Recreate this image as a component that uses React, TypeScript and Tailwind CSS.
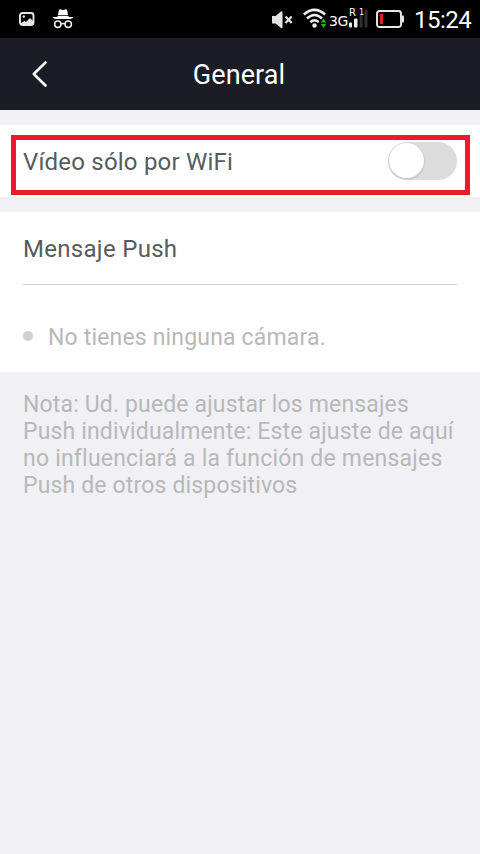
import React from "react";

const NOTE_LINES = [
  { text: "Nota: Ud. puede ajustar los mensajes", tracking: "tracking-[0.15px]" },
  { text: "Push individualmente: Este ajuste de aquí", tracking: "tracking-[0.16px]" },
  { text: "no influenciará a la función de mensajes", tracking: "tracking-[0.21px]" },
  { text: "Push de otros dispositivos", tracking: "tracking-[0.16px]" },
];

function PictureIcon() {
  return (
    <svg width="16" height="14" viewBox="0 0 16 14" className="ml-[19px]">
      <rect x="1" y="1" width="13.5" height="12" rx="2.5" fill="none" stroke="#e6e6e6" strokeWidth="1.900" />
      <circle cx="4.800" cy="4.500" r="1.200" fill="#e6e6e6" />
      <path d="M2 12.500V11l3.500-2 1.500 1L11 6l3 3v4z" fill="#e6e6e6" />
    </svg>
  );
}

function IncognitoIcon() {
  return (
    <svg width="22" height="20" viewBox="0 0 22 20" className="ml-[17px]">
      <path d="M7 1q.5-1 1.700-.6L11 1l2.300-.6Q14.500 0 15 1l1.200 5.200H5.800z" fill="#fff" />
      <path d="M5.600 7h10.800l.4 1H21.500q-1 2-3.500 2H4Q1.500 10 .5 8h4.700z" fill="#fff" />
      <g fill="none" stroke="#f2f2f2" strokeWidth="1.500">
        <circle cx="5.800" cy="15.300" r="3.200" />
        <circle cx="16.200" cy="15.300" r="3.200" />
        <path d="M9 15q2-1 4 0" />
      </g>
    </svg>
  );
}

function MutedIcon() {
  return (
    <svg width="22" height="20" viewBox="0 0 22 20" className="relative top-px ml-auto">
      <path d="M0 6h3.500L9 1.500Q10.500 .5 10.500 2.500v14.500Q10.500 19 9 18L3.500 13.500H0z" fill="#e4e4e4" />
      <path d="m13.500 6.500 6.200 6.400m0-6.400-6.200 6.400" stroke="#e4e4e4" strokeWidth="2.200" />
    </svg>
  );
}

function WifiIcon() {
  return (
    <svg width="26" height="20" viewBox="0 0 26 20" className="relative -top-px ml-[9px]">
      <g fill="none" stroke="#eee" strokeWidth="2.500">
        <path d="M.8 6.500Q11.500-2.800 22.200 6.500" />
        <path d="M4 10.500Q11.500 3.500 19 10.500" />
        <path d="M7.300 14.200Q11.500 10.200 15.700 14.200" />
      </g>
      <circle cx="11.500" cy="17.500" r="2.200" fill="#eee" />
      <path d="m20.500 10.500 2.800 4h-5.600zM17.700 16h5.600l-2.800 4z" fill="#25b51b" />
    </svg>
  );
}

function SignalIcon() {
  return (
    <svg width="19" height="18" viewBox="0 0 19 18">
      <rect x="0" y="12.500" width="3" height="5" rx="1" fill="#eee" />
      <rect x="5" y="8.500" width="3.500" height="9" rx="1" fill="#eee" />
      <rect x="10.500" y="5" width="3" height="12.500" rx="1" fill="#303030" />
      <rect x="15.500" y="0" width="3" height="17.500" rx="1" fill="#303030" />
    </svg>
  );
}

function BatteryIcon() {
  return (
    <svg width="29" height="18" viewBox="0 0 29 18" className="ml-2">
      <rect x="1" y="1" width="24" height="16" rx="2.500" fill="none" stroke="#e8e8e8" strokeWidth="1.900" />
      <path d="M26 5.500h1q1 0 1 1v5q0 1-1 1h-1z" fill="#e8e8e8" />
      <rect x="4" y="4" width="3" height="10" fill="#e52222" />
    </svg>
  );
}

function StatusBar() {
  return (
    <div className="flex h-[38px] items-center bg-black text-white">
      <PictureIcon />
      <IncognitoIcon />
      <MutedIcon />
      <WifiIcon />
      <span className="relative top-[2px] w-[20px] font-['DejaVu_Sans'] text-[14px] leading-none tracking-[-0.5px]">3G</span>
      <div className="relative">
        <SignalIcon />
        <span className="absolute top-[-2px] left-0 font-['DejaVu_Sans'] text-[10px] leading-none">R</span>
        <span className="absolute top-[-1px] left-[10px] font-['DejaVu_Sans'] text-[8px] leading-none">1</span>
      </div>
      <BatteryIcon />
      <span className="relative top-px ml-[9px] w-[66px] text-[24px] leading-none tracking-[-0.5px] whitespace-nowrap">15:24</span>
    </div>
  );
}

function Header() {
  return (
    <div className="relative flex h-[72px] items-center justify-center bg-[#1c1c24]">
      <svg width="18" height="28" viewBox="0 0 18 28" className="absolute top-[22px] left-[31px]">
        <path d="M14.500 2.500 2.800 14l11.700 11.500" fill="none" stroke="#fff" strokeWidth="2.600" strokeLinecap="round" strokeLinejoin="round" />
      </svg>
      <h1 className="pt-[3px] pr-[2px] text-[27px] leading-none tracking-[0.1px] text-white">General</h1>
    </div>
  );
}

function Toggle() {
  return (
    <div className="h-[38px] w-[69px] overflow-hidden rounded-[19px] bg-[#dcdcdc] p-px">
      <div className="h-[35px] w-[35px] rounded-full bg-white shadow-[0_1px_2px_1px_#c8c8c8]" />
    </div>
  );
}

export default function App() {
  return (
    <div className="h-[854px] w-[480px] overflow-hidden bg-[#f0f0f5] font-[Roboto,sans-serif]">
      <StatusBar />
      <Header />

      {/* Wifi only, highlighted */}
      <div className="mt-[15px] h-[72px] bg-white px-[11px] pt-[10px]">
        <div className="flex h-[60px] w-[459px] justify-between border-5 border-[#ed1c24] pr-2 pl-[7px]">
          <span className="pt-[8px] text-[24px] leading-[28px] tracking-[0.2px] text-[#535c61]">Vídeo sólo por WiFi</span>
          <div className="pt-[2px]">
            <Toggle />
          </div>
        </div>
      </div>

      {/* Push messages */}
      <div className="mt-[15px] h-[160px] bg-white px-[23px]">
        <div className="flex h-[73px] items-center border-b border-[#d0d0d0] pt-[2px] text-[24px] tracking-[0.3px] text-[#535c61]">
          Mensaje Push
        </div>
        <div className="flex pt-[39px] text-[23px] leading-[28px] tracking-[0.17px] text-[#b8b8b8]">
          <span className="mt-[7px] mr-[15px] h-[10px] w-[10px] rounded-full bg-[#d0d0d0]" />
          <span>No tienes ninguna cámara.</span>
        </div>
      </div>

      <p className="px-[23px] pt-[19px] text-[23px] leading-[27px] whitespace-nowrap text-[#b8b8b8]">
        {NOTE_LINES.map((line) => (
          <span key={line.text} className={`block ${line.tracking}`}>
            {line.text}
          </span>
        ))}
      </p>
    </div>
  );
}
